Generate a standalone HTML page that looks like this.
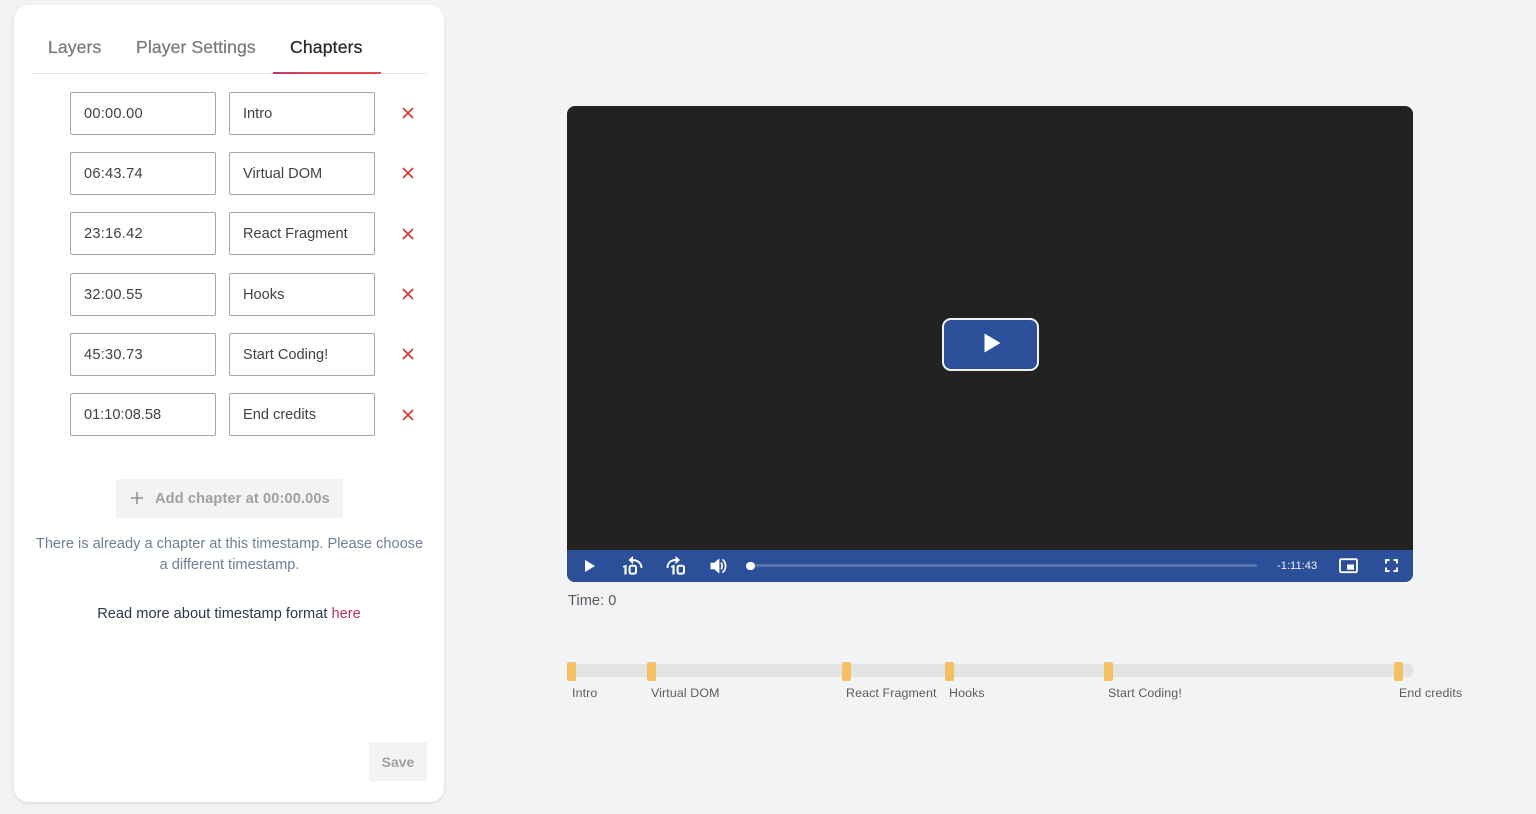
<!DOCTYPE html>
<html>
<head>
<meta charset="utf-8">
<style>
html,body{margin:0;padding:0;width:1536px;height:814px;overflow:hidden;background:#f2f3f5;font-family:"Liberation Sans",sans-serif;-webkit-font-smoothing:antialiased}
#w{position:absolute;left:0;top:0;width:1536px;height:814px;filter:blur(.35px)}
.a{position:absolute;white-space:nowrap}
#card{left:14px;top:5px;width:430px;height:797px;background:#fff;border-radius:14px;box-shadow:0 1px 3px rgba(0,0,0,.12)}
.tab{font-size:17.6px;top:36px;line-height:22px;color:#7a7a7a;-webkit-text-stroke:.25px currentColor}
.in{width:144px;height:41px;border:1px solid #a6a6a6;border-radius:2px;background:#fff;color:#3f4247;font-size:14.6px;line-height:43px;text-indent:13px}
.t{letter-spacing:.25px}
.x{width:12px;height:12px}
.lbl{top:686px;font-size:12.4px;line-height:14px;color:#5c5c5c;letter-spacing:.12px}
.mk{top:662px;width:9px;height:19px;background:#f5c064;border-radius:2px}
</style>
</head>
<body>
<div id="w">
<div class="a" id="card"></div>

<div class="a tab" style="left:48px;letter-spacing:.1px">Layers</div>
<div class="a tab" style="left:136px;letter-spacing:.1px">Player Settings</div>
<div class="a tab" style="left:290px;color:#26282b;letter-spacing:.15px">Chapters</div>
<div class="a" style="left:31px;top:73px;width:396px;height:1px;background:#e6e7e9"></div>
<div class="a" style="left:273px;top:71.5px;width:108px;height:2px;background:linear-gradient(90deg,#b83a6e,#e8474a 40%)"></div>

<div class="a in t" style="left:70px;top:92px">00:00.00</div>
<div class="a in" style="left:229px;top:92px">Intro</div>
<div class="a in t" style="left:70px;top:152px">06:43.74</div>
<div class="a in" style="left:229px;top:152px">Virtual DOM</div>
<div class="a in t" style="left:70px;top:212px">23:16.42</div>
<div class="a in" style="left:229px;top:212px">React Fragment</div>
<div class="a in t" style="left:70px;top:273px">32:00.55</div>
<div class="a in" style="left:229px;top:273px">Hooks</div>
<div class="a in t" style="left:70px;top:333px">45:30.73</div>
<div class="a in" style="left:229px;top:333px">Start Coding!</div>
<div class="a in" style="left:70px;top:393px">01:10:08.58</div>
<div class="a in" style="left:229px;top:393px">End credits</div>

<svg class="a x" style="left:402px;top:107px" viewBox="0 0 12 12"><path d="M1 1L11 11M11 1L1 11" stroke="#d33a38" stroke-width="1.7" fill="none"/></svg>
<svg class="a x" style="left:402px;top:167px" viewBox="0 0 12 12"><path d="M1 1L11 11M11 1L1 11" stroke="#d33a38" stroke-width="1.7" fill="none"/></svg>
<svg class="a x" style="left:402px;top:228px" viewBox="0 0 12 12"><path d="M1 1L11 11M11 1L1 11" stroke="#d33a38" stroke-width="1.7" fill="none"/></svg>
<svg class="a x" style="left:402px;top:288px" viewBox="0 0 12 12"><path d="M1 1L11 11M11 1L1 11" stroke="#d33a38" stroke-width="1.7" fill="none"/></svg>
<svg class="a x" style="left:402px;top:348px" viewBox="0 0 12 12"><path d="M1 1L11 11M11 1L1 11" stroke="#d33a38" stroke-width="1.7" fill="none"/></svg>
<svg class="a x" style="left:402px;top:409px" viewBox="0 0 12 12"><path d="M1 1L11 11M11 1L1 11" stroke="#d33a38" stroke-width="1.7" fill="none"/></svg>

<div class="a" style="left:116px;top:479px;width:227px;height:39px;background:#f2f3f5;border-radius:2px"></div>
<svg class="a" style="left:130px;top:491px;width:14px;height:14px" viewBox="0 0 14 14"><path d="M7 1V13M1 7H13" stroke="#8f8f8f" stroke-width="1.5" fill="none"/></svg>
<div class="a" style="left:155px;top:490px;font-size:14.6px;line-height:19px;font-weight:bold;color:#a0a0a0;letter-spacing:.12px">Add chapter at 00:00.00s</div>

<div class="a" style="left:14px;width:431px;top:534px;text-align:center;font-size:14.6px;line-height:21px;color:#718096;letter-spacing:-.01px;white-space:normal"><div>There is already a chapter at this timestamp. Please choose</div><div>a different timestamp.</div></div>
<div class="a" style="left:14px;width:430px;top:604px;text-align:center;font-size:14.6px;line-height:20px;color:#2d3748;letter-spacing:.02px">Read more about timestamp format <span style="color:#b83260">here</span></div>

<div class="a" style="left:369px;top:742px;width:58px;height:39px;background:#f2f3f5;border-radius:2px;text-align:center;font-size:14px;font-weight:bold;line-height:41px;color:#a0a0a0">Save</div>

<!-- player -->
<div class="a" style="left:567px;top:106px;width:846px;height:476px;background:#222;border-radius:8px;overflow:hidden">
  <div class="a" style="left:0;top:444px;width:846px;height:32px;background:#2c4f99"></div>
</div>
<div class="a" style="left:942px;top:318px;width:93px;height:49px;background:#2c4f99;border:2px solid #f0f2f5;border-radius:9px"></div>
<svg class="a" style="left:984px;top:333px;width:17px;height:20px" viewBox="0 0 17 20"><path d="M0.5 0.5L16.5 10L0.5 19.5Z" fill="#fff"/></svg>

<svg class="a" style="left:584px;top:559px;width:12px;height:14px" viewBox="0 0 12 14"><path d="M1 1L11 7L1 13Z" fill="#fff"/></svg>

<svg class="a" style="left:622px;top:555px;width:21px;height:22px" viewBox="0 0 21 22">
<path d="M10 5C15.5 5 19.5 8 19.5 13" stroke="#fff" stroke-width="1.9" fill="none"/>
<path d="M11 1L6.5 5L11 9.2Z" fill="#fff"/>
<path d="M1 11L4.6 9.8V19.5H2.4V12.2L1 12.6Z" fill="#fff"/>
<rect x="7.6" y="10.8" width="6.4" height="7.8" rx="1.6" fill="none" stroke="#fff" stroke-width="2"/>
</svg>
<svg class="a" style="left:666px;top:555px;width:21px;height:22px" viewBox="0 0 21 22">
<path d="M10 5C4.5 5 1.5 8 1.5 13" stroke="#fff" stroke-width="1.9" fill="none"/>
<path d="M9.5 1L14 5L9.5 9.2Z" fill="#fff"/>
<path d="M5 11L8.6 9.8V19.5H6.4V12.2L5 12.6Z" fill="#fff"/>
<rect x="11.6" y="10.8" width="6.4" height="7.8" rx="1.6" fill="none" stroke="#fff" stroke-width="2"/>
</svg>
<svg class="a" style="left:710px;top:558px;width:17px;height:16px" viewBox="0 0 17 16">
<path d="M0.5 4.8H4.2L9.4 0.4V15.6L4.2 11.2H0.5Z" fill="#fff"/>
<path d="M11 4.6C12.4 6 12.4 10 11 11.4" stroke="#fff" stroke-width="1.7" fill="none"/>
<path d="M12.4 1.4C16.6 4.4 16.6 11.6 12.4 14.6" stroke="#fff" stroke-width="1.7" fill="none"/>
</svg>

<div class="a" style="left:750px;top:564px;width:507px;height:3px;background:#5a74ab;border-radius:2px"></div>
<div class="a" style="left:746px;top:561.5px;width:8.5px;height:8.5px;background:#fff;border-radius:50%"></div>
<div class="a" style="left:1277px;top:559px;font-size:11.2px;line-height:14px;color:#eef1f7">-1:11:43</div>

<svg class="a" style="left:1339px;top:558px;width:19px;height:16px" viewBox="0 0 19 16">
<rect x="1" y="1.2" width="17" height="13" rx="1.2" fill="none" stroke="#fff" stroke-width="1.8"/>
<rect x="8" y="6.5" width="7" height="5.2" fill="#fff"/>
</svg>
<svg class="a" style="left:1385px;top:559px;width:13px;height:13px" viewBox="0 0 13 13">
<path d="M1 4.5V1H4.5M8.5 1H12V4.5M12 8.5V12H8.5M4.5 12H1V8.5" stroke="#fff" stroke-width="1.9" fill="none"/>
</svg>

<div class="a" style="left:568px;top:592px;font-size:14.6px;line-height:18px;color:#55585c;letter-spacing:.05px">Time: 0</div>

<!-- timeline -->
<div class="a" style="left:567px;top:664px;width:846px;height:13px;background:#e3e3e3;border-radius:4px"></div>
<div class="a mk" style="left:567px"></div>
<div class="a mk" style="left:647px"></div>
<div class="a mk" style="left:842px"></div>
<div class="a mk" style="left:945px"></div>
<div class="a mk" style="left:1104px"></div>
<div class="a mk" style="left:1394px"></div>
<div class="a lbl" style="left:572px">Intro</div>
<div class="a lbl" style="left:651px">Virtual DOM</div>
<div class="a lbl" style="left:846px">React Fragment</div>
<div class="a lbl" style="left:949px">Hooks</div>
<div class="a lbl" style="left:1108px">Start Coding!</div>
<div class="a lbl" style="left:1399px">End credits</div>
</div>
</body>
</html>
